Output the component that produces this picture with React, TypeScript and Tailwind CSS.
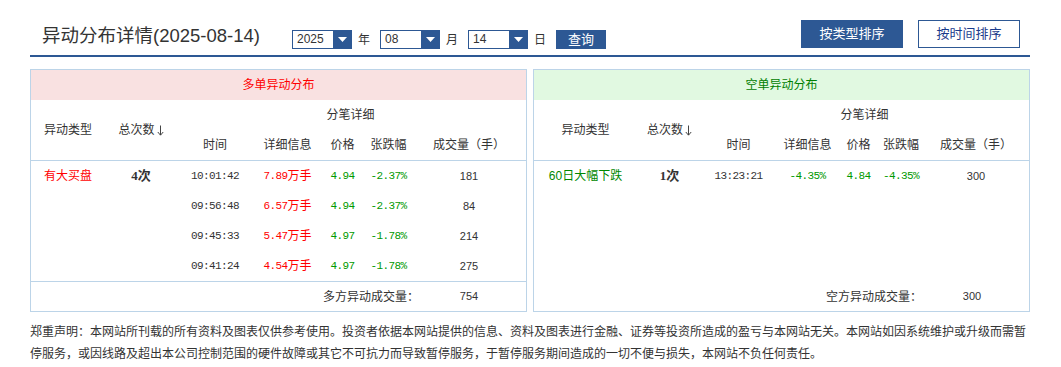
const sans = "font-['Liberation_Sans','Noto_Sans_CJK_SC',sans-serif]";
const mono = "font-['Liberation_Mono','Noto_Sans_CJK_SC',monospace]";
const line = "border-[#bcd4e8]";

type Tick = { time: string; detail: string; price: string; pct: string; vol: string };

const longTicks: Tick[] = [
  { time: "10:01:42", detail: "7.89", price: "4.94", pct: "-2.37%", vol: "181" },
  { time: "09:56:48", detail: "6.57", price: "4.94", pct: "-2.37%", vol: "84" },
  { time: "09:45:33", detail: "5.47", price: "4.97", pct: "-1.78%", vol: "214" },
  { time: "09:41:24", detail: "4.54", price: "4.97", pct: "-1.78%", vol: "275" },
];

const shortTicks: Tick[] = [
  { time: "13:23:21", detail: "-4.35%", price: "4.84", pct: "-4.35%", vol: "300" },
];

function Select({ value }: { value: string }) {
  return (
    <div className="flex h-[19px] w-[60px] border border-[#2d5894] bg-white">
      <div className="flex-1 pl-[4px] text-[12px] leading-[17px] text-[#333]">{value}</div>
      <div className="flex w-[18px] items-center justify-center bg-[#2d5894]">
        <svg width="9" height="5" viewBox="0 0 9 5">
          <path d="M0 0h9L4.5 5z" fill="#fff" />
        </svg>
      </div>
    </div>
  );
}

function Cell({ children, className = "" }: { children?: React.ReactNode; className?: string }) {
  return <div className={`flex items-center justify-center whitespace-nowrap ${className}`}>{children}</div>;
}

function DownArrow() {
  return (
    <svg width="7" height="11" viewBox="0 0 7 11" className="ml-[2px]">
      <path d="M3.5 0.5V10M0.8 7L3.5 10.2L6.2 7" fill="none" stroke="#444" strokeWidth="1" />
    </svg>
  );
}

function Panel({
  title,
  headBg,
  headColor,
  cols,
  type,
  typeColor,
  count,
  ticks,
  unit,
  footLabel,
  footValue,
  footLine,
}: {
  title: string;
  headBg: string;
  headColor: string;
  cols: string;
  type: string;
  typeColor: string;
  count: string;
  ticks: Tick[];
  unit: boolean;
  footLabel: string;
  footValue: string;
  footLine: boolean;
}) {
  return (
    <div className={`flex w-[497px] flex-col border ${line}`}>
      <div className={`flex h-[30px] items-center justify-center text-[12px] ${headBg} ${headColor}`}>{title}</div>
      <div className={`grid ${cols} grid-rows-[30px_30px] border-b ${line} text-[12px] text-[#333]`}>
        <Cell className="row-span-2">异动类型</Cell>
        <Cell className="row-span-2">
          总次数
          <DownArrow />
        </Cell>
        <Cell className="col-span-5">分笔详细</Cell>
        <Cell>时间</Cell>
        <Cell>详细信息</Cell>
        <Cell>价格</Cell>
        <Cell>张跌幅</Cell>
        <Cell>成交量（手）</Cell>
      </div>
      <div className={`grid ${cols} auto-rows-[30px] text-[12px]`}>
        {ticks.map((t, i) => (
          <div key={t.time} className="contents">
            <Cell className={typeColor}>{i === 0 ? type : ""}</Cell>
            <Cell className="text-[13px] font-bold text-[#333]">
              {i === 0 && (
                <>
                  <span className="font-['Liberation_Serif',serif]">{count}</span>次
                </>
              )}
            </Cell>
            <Cell className={`${mono} text-[11px] tracking-[-0.6px] text-[#333]`}>{t.time}</Cell>
            <Cell className={unit ? "text-[#f00]" : "text-[#009900]"}>
              <span className={`${mono} text-[11px] tracking-[-0.6px]`}>{t.detail}</span>
              {unit && "万手"}
            </Cell>
            <Cell className={`${mono} text-[11px] tracking-[-0.6px] text-[#009900]`}>{t.price}</Cell>
            <Cell className={`${mono} text-[11px] tracking-[-0.6px] text-[#009900]`}>{t.pct}</Cell>
            <Cell className="text-[11px] text-[#333]">{t.vol}</Cell>
          </div>
        ))}
      </div>
      <div className="flex-1" />
      <div
        className={`grid h-[30px] grid-cols-[388px_100px] border-t text-[12px] text-[#333] ${
          footLine ? line : "border-transparent"
        }`}
      >
        <div className="flex items-center justify-end">{footLabel}</div>
        <Cell className="text-[11px]">{footValue}</Cell>
      </div>
    </div>
  );
}

export default function App() {
  return (
    <div className={`min-h-screen bg-white ${sans}`}>
      <div className="ml-[30px] w-[1000px]">
        <div className="flex h-[57px] items-start border-b-2 border-[#2d5894]">
          <div className="w-[262px] pl-[12px] pt-[24px] text-[18.5px] leading-[24px] text-[#333]">
            异动分布详情(2025-08-14)
          </div>
          <div className="mt-[30px] flex items-center text-[12px] text-[#333]">
            <Select value="2025" />
            <span className="ml-[6px] mr-[10px]">年</span>
            <Select value="08" />
            <span className="ml-[6px] mr-[10px]">月</span>
            <Select value="14" />
            <span className="ml-[6px] mr-[10px]">日</span>
            <button className="h-[19px] w-[50px] bg-[#2d5894] text-[13px] leading-[19px] text-white">查询</button>
          </div>
          <div className="ml-auto mr-[10px] mt-[20px] flex gap-[15px] text-[13px]">
            <button className="h-[28px] w-[102px] bg-[#2d5894] text-white">按类型排序</button>
            <button className="h-[28px] w-[102px] border border-[#2d5894] bg-white text-[#1a3b8c]">按时间排序</button>
          </div>
        </div>

        <div className="mt-[12px] flex gap-[6px]">
          <Panel
            title="多单异动分布"
            headBg="bg-[#f9e1e1]"
            headColor="text-[#f00]"
            cols="grid-cols-[74px_72px_76px_69px_41px_51px_110px]"
            type="有大买盘"
            typeColor="text-[#f00]"
            count="4"
            ticks={longTicks}
            unit
            footLabel="多方异动成交量："
            footValue="754"
            footLine
          />
          <Panel
            title="空单异动分布"
            headBg="bg-[#e1f9e1]"
            headColor="text-[#008000]"
            cols="grid-cols-[103px_65px_73px_65px_37px_48px_102px]"
            type="60日大幅下跌"
            typeColor="text-[#008800]"
            count="1"
            ticks={shortTicks}
            unit={false}
            footLabel="空方异动成交量："
            footValue="300"
            footLine={false}
          />
        </div>

        <p className="mt-[9px] text-[12px] leading-[22px] text-[#333]">
          郑重声明：本网站所刊载的所有资料及图表仅供参考使用。投资者依据本网站提供的信息、资料及图表进行金融、证券等投资所造成的盈亏与本网站无关。本网站如因系统维护或升级而需暂停服务，或因线路及超出本公司控制范围的硬件故障或其它不可抗力而导致暂停服务，于暂停服务期间造成的一切不便与损失，本网站不负任何责任。
        </p>
      </div>
    </div>
  );
}
